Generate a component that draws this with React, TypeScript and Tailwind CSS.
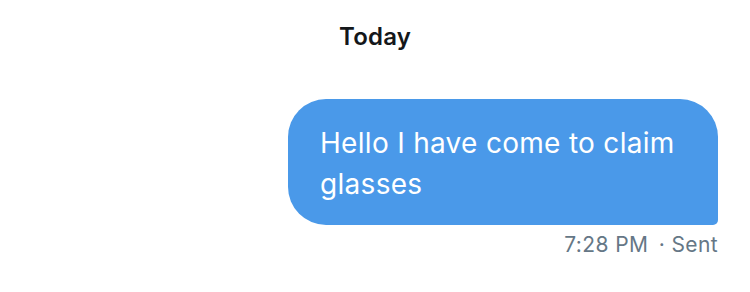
import React from 'react';

const App: React.FC = () => {
  return (
    <div className="w-[750px] h-[292px] bg-white overflow-hidden" style={{ fontFamily: 'Inter, "Noto Sans", sans-serif' }}>
      {/* Day divider */}
      <div className="pt-[21px] flex justify-center">
        <span className="text-[24px] leading-[32px] font-semibold tracking-[0.2px] text-[#14171a]">Today</span>
      </div>

      {/* Outgoing message */}
      <div className="mt-[46px] pr-[32px] flex flex-col items-end">
        <div className="w-[430px] min-h-[126px] bg-[#4a99e9] rounded-[38px] rounded-br-[5px] pl-[32px] pr-[20px] pt-[24px] pb-[20px]">
          <p className="text-white text-[28px] leading-[41px] tracking-[0.3px]">
            Hello I have come to claim glasses
          </p>
        </div>
        <div className="mt-[6px] text-[21px] leading-[27px] tracking-[0.4px] text-[#657786]">
          7:28 PM <span className="ml-[4px]">· Sent</span>
        </div>
      </div>
    </div>
  );
};

export default App;
